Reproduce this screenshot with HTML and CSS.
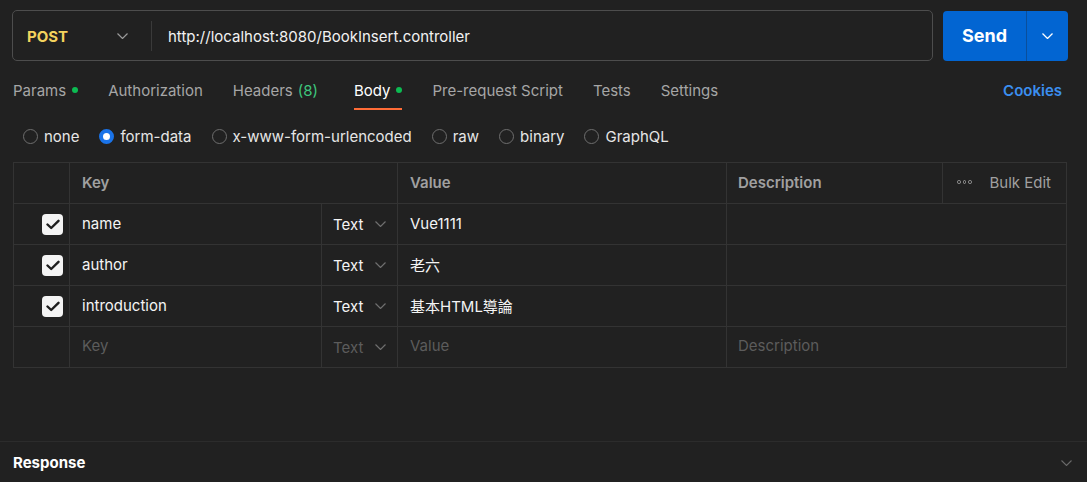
FILE: index.html
```html
<!DOCTYPE html>
<html lang="en">
<head>
<meta charset="utf-8">
<title>Postman request</title>
<link rel="stylesheet" href="styles.css">
</head>
<body>
<div class="app">
  <div class="request-bar">
    <div class="url-box">
      <div class="method">
        <span class="method-name">POST</span>
        <svg class="chev" width="11" height="6" viewBox="0 0 11 6"><polyline points="0.5,0.5 5.5,5.5 10.5,0.5" fill="none" stroke="#9a9a9a" stroke-width="1.2"/></svg>
      </div>
      <div class="url-divider"></div>
      <div class="url">http://localhost:8080/BookInsert.controller</div>
    </div>
    <div class="send">
      <div class="send-main">Send</div>
      <div class="send-more">
        <svg width="11" height="6" viewBox="0 0 11 6"><polyline points="0.5,0.5 5.5,5.5 10.5,0.5" fill="none" stroke="#ffffff" stroke-width="1.3"/></svg>
      </div>
    </div>
  </div>

  <div class="tabs">
    <div class="tab-list">
      <div class="tab">Params<span class="dot"></span></div>
      <div class="tab">Authorization</div>
      <div class="tab headers">Headers <span class="count">(8)</span></div>
      <div class="tab active">Body<span class="dot"></span></div>
      <div class="tab">Pre-request Script</div>
      <div class="tab">Tests</div>
      <div class="tab">Settings</div>
    </div>
    <div class="cookies">Cookies</div>
  </div>

  <div class="radios">
    <label class="radio"><span class="circle"></span>none</label>
    <label class="radio"><span class="circle on"></span>form-data</label>
    <label class="radio"><span class="circle"></span>x-www-form-urlencoded</label>
    <label class="radio"><span class="circle"></span>raw</label>
    <label class="radio"><span class="circle"></span>binary</label>
    <label class="radio"><span class="circle"></span>GraphQL</label>
  </div>

  <div class="table">
    <div class="row head">
      <div class="cell"></div>
      <div class="cell span2">Key</div>
      <div class="cell">Value</div>
      <div class="cell">Description</div>
      <div class="cell bulk"><span class="dots"><i></i><i></i><i></i></span>Bulk Edit</div>
    </div>
    <div class="row">
      <div class="cell check"><span class="box"><svg width="14" height="11" viewBox="0 0 14 11"><polyline points="1.5,5.5 5.2,9 12.5,1.8" fill="none" stroke="#1e1e1e" stroke-width="2.4" stroke-linecap="round" stroke-linejoin="round"/></svg></span></div>
      <div class="cell">name</div>
      <div class="cell type">Text<svg class="chev" width="11" height="6" viewBox="0 0 11 6"><polyline points="0.5,0.5 5.5,5.5 10.5,0.5" fill="none" stroke="#6f6f6f" stroke-width="1.2"/></svg></div>
      <div class="cell">Vue1111</div>
      <div class="cell desc"></div>
    </div>
    <div class="row">
      <div class="cell check"><span class="box"><svg width="14" height="11" viewBox="0 0 14 11"><polyline points="1.5,5.5 5.2,9 12.5,1.8" fill="none" stroke="#1e1e1e" stroke-width="2.4" stroke-linecap="round" stroke-linejoin="round"/></svg></span></div>
      <div class="cell">author</div>
      <div class="cell type">Text<svg class="chev" width="11" height="6" viewBox="0 0 11 6"><polyline points="0.5,0.5 5.5,5.5 10.5,0.5" fill="none" stroke="#6f6f6f" stroke-width="1.2"/></svg></div>
      <div class="cell">老六</div>
      <div class="cell desc"></div>
    </div>
    <div class="row">
      <div class="cell check"><span class="box"><svg width="14" height="11" viewBox="0 0 14 11"><polyline points="1.5,5.5 5.2,9 12.5,1.8" fill="none" stroke="#1e1e1e" stroke-width="2.4" stroke-linecap="round" stroke-linejoin="round"/></svg></span></div>
      <div class="cell">introduction</div>
      <div class="cell type">Text<svg class="chev" width="11" height="6" viewBox="0 0 11 6"><polyline points="0.5,0.5 5.5,5.5 10.5,0.5" fill="none" stroke="#6f6f6f" stroke-width="1.2"/></svg></div>
      <div class="cell">基本HTML導論</div>
      <div class="cell desc"></div>
    </div>
    <div class="row placeholder">
      <div class="cell"></div>
      <div class="cell">Key</div>
      <div class="cell type">Text<svg class="chev" width="11" height="6" viewBox="0 0 11 6"><polyline points="0.5,0.5 5.5,5.5 10.5,0.5" fill="none" stroke="#6f6f6f" stroke-width="1.2"/></svg></div>
      <div class="cell">Value</div>
      <div class="cell desc">Description</div>
    </div>
  </div>

  <div class="response">
    <span>Response</span>
    <svg width="11" height="6" viewBox="0 0 11 6"><polyline points="0.5,0.5 5.5,5.5 10.5,0.5" fill="none" stroke="#6a6a6a" stroke-width="1.1"/></svg>
  </div>
</div>
</body>
</html>
```

FILE: styles.css
```css
* { box-sizing: border-box; }

html, body {
  margin: 0;
  padding: 0;
  background: #212121;
  overflow: hidden;
}

body {
  font-family: Inter, "Noto Sans CJK TC", "Noto Sans CJK SC", sans-serif;
  font-size: 15px;
  color: #f0f0f0;
}

.app {
  height: 100vh;
  display: flex;
  flex-direction: column;
}

/* request bar */
.request-bar {
  display: flex;
  gap: 10px;
  padding: 10px 19px 0 12px;
}

.url-box {
  flex: 1;
  height: 51px;
  border: 1px solid #4d4d4d;
  border-radius: 5px;
  display: flex;
  align-items: center;
}

.method {
  width: 138px;
  height: 100%;
  display: flex;
  align-items: center;
  justify-content: space-between;
  padding: 1px 23px 0 14px;
}

.method-name {
  color: #f4d35e;
  font-weight: 700;
  font-size: 15px;
}

.url-divider {
  width: 1px;
  height: 30px;
  background: #3a3a3a;
}

.url {
  padding-left: 16px;
  padding-top: 1px;
  color: #f2f2f2;
  font-size: 15px;
}

.send {
  width: 125px;
  height: 50px;
  margin-top: 1px;
  background: #0265d2;
  border-radius: 4px;
  display: flex;
}

.send-main {
  width: 84px;
  display: flex;
  align-items: center;
  justify-content: center;
  color: #fff;
  font-weight: 700;
  font-size: 18px;
  padding-bottom: 1px;
  border-right: 1px solid #0a4f9c;
}

.send-more {
  flex: 1;
  display: flex;
  align-items: center;
  justify-content: center;
}

/* tabs */
.tabs {
  display: flex;
  justify-content: space-between;
  align-items: flex-start;
  margin-top: 10px;
  padding: 0 25px 0 13px;
}

.tab-list {
  display: flex;
  gap: 30px;
}

.tab {
  height: 39px;
  display: flex;
  align-items: center;
  color: #a6a6a6;
  font-size: 15px;
  border-bottom: 2px solid transparent;
  padding-top: 1px;
}

.tab.headers {
  margin-right: 6px;
}

.tab.active {
  color: #ffffff;
  border-bottom-color: #ff6c37;
}

.dot {
  width: 6px;
  height: 6px;
  border-radius: 50%;
  background: #0cbb52;
  margin-left: 6px;
}

.count {
  color: #3ec67d;
  margin-left: 5px;
}

.cookies {
  height: 39px;
  display: flex;
  align-items: center;
  color: #3b8ff0;
  font-weight: 600;
  font-size: 15px;
}

/* radios */
.radios {
  height: 52px;
  display: flex;
  align-items: center;
  gap: 20px;
  padding-left: 23px;
}

.radio {
  display: flex;
  align-items: center;
  gap: 6px;
  color: #e6e6e6;
  font-size: 15px;
}

.circle {
  width: 15px;
  height: 15px;
  border-radius: 50%;
  border: 1px solid #6e6e6e;
}

.circle.on {
  border: 4px solid #1a73e8;
  background: #ffffff;
}

/* table */
.table {
  margin: 0 20px 0 13px;
  border-top: 1px solid #333333;
  border-left: 1px solid #333333;
}

.row {
  display: grid;
  grid-template-columns: 56px 252px 76px 329px 216px 124px;
}

.cell {
  height: 41px;
  border-right: 1px solid #333333;
  border-bottom: 1px solid #333333;
  display: flex;
  align-items: center;
  padding-left: 11px;
  padding-bottom: 2px;
  color: #f4f4f4;
  font-size: 15px;
  white-space: nowrap;
}

.row > .cell:nth-child(2) { padding-left: 12px; }
.row > .cell:nth-child(4) { padding-left: 12px; }

.cell.desc {
  grid-column: span 2;
}

.head .cell {
  color: #a0a0a0;
  font-weight: 600;
  font-size: 15px;
}

.head .span2 {
  grid-column: span 2;
  padding-left: 12px;
}

.head > .cell:nth-child(3) { padding-left: 12px; }
.head > .cell:nth-child(4) { padding-left: 11px; }

.bulk {
  padding-left: 14px;
  font-weight: 400 !important;
}

.dots {
  display: flex;
  gap: 2px;
  margin-right: 18px;
}

.dots i {
  width: 3.5px;
  height: 3.5px;
  border-radius: 50%;
  border: 1px solid #9a9a9a;
}

.check {
  justify-content: flex-end;
  padding-right: 6px;
  padding-bottom: 0;
}

.box {
  width: 21px;
  height: 21px;
  border-radius: 4px;
  background: #f4f4f4;
  display: flex;
  align-items: center;
  justify-content: center;
}

.type {
  padding-bottom: 0;
}

.type .chev {
  margin-left: 12px;
}

.placeholder .cell {
  color: #5c5c5c;
  padding-bottom: 4px;
}

.placeholder .type {
  padding-bottom: 0;
}

/* response */
.response {
  margin-top: auto;
  height: 41px;
  border-top: 1px solid #2c2c2c;
  display: flex;
  align-items: center;
  justify-content: space-between;
  padding: 1px 15px 0 13px;
  font-weight: 700;
  font-size: 15px;
  color: #ffffff;
}
```
